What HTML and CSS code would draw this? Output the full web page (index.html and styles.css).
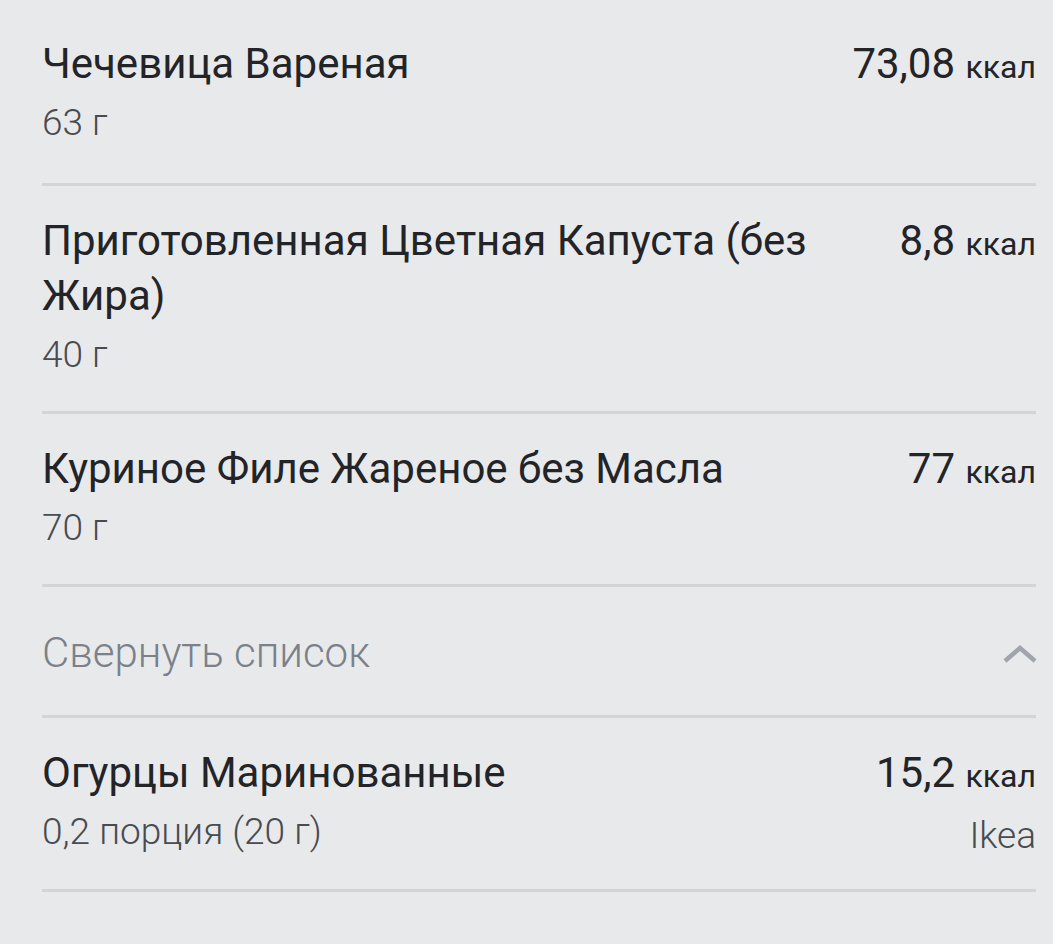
FILE: index.html
```html
<!DOCTYPE html>
<html lang="ru">
<head>
    <meta charset="UTF-8">
    <meta name="viewport" content="width=device-width, initial-scale=1.0">
    <title>Продукты</title>
    <link rel="stylesheet" href="styles.css">
</head>
<body>
    <div class="food_list">
        <div class="food_item">
            <div class="food_info">
                <p class="food_name">Чечевица Вареная</p>
                <p class="food_amount">63 г</p>
            </div>
            <div class="food_side">
                <p class="food_kcal">73,08 <span>ккал</span></p>
            </div>
        </div>
        <div class="food_item">
            <div class="food_info">
                <p class="food_name">Приготовленная Цветная Капуста (без Жира)</p>
                <p class="food_amount">40 г</p>
            </div>
            <div class="food_side">
                <p class="food_kcal">8,8 <span>ккал</span></p>
            </div>
        </div>
        <div class="food_item">
            <div class="food_info">
                <p class="food_name">Куриное Филе Жареное без Масла</p>
                <p class="food_amount">70 г</p>
            </div>
            <div class="food_side">
                <p class="food_kcal">77 <span>ккал</span></p>
            </div>
        </div>
        <div class="collapse_row">
            <p class="collapse_text">Свернуть список</p>
            <svg class="collapse_icon" width="34" height="19" viewBox="0 0 34 19">
                <polyline points="2,16 17,3 32,16" fill="none" stroke="#a0a5ac" stroke-width="4.5"/>
            </svg>
        </div>
        <div class="food_item">
            <div class="food_info">
                <p class="food_name">Огурцы Маринованные</p>
                <p class="food_amount">0,2 порция (20 г)</p>
            </div>
            <div class="food_side">
                <p class="food_kcal">15,2 <span>ккал</span></p>
                <p class="food_brand">Ikea</p>
            </div>
        </div>
    </div>
</body>
</html>
```

FILE: styles.css
```css
* { margin: 0; padding: 0; box-sizing: border-box; }

body {
    background-color: #e8e9eb;
    font-family: Roboto, "Noto Sans", sans-serif;
    color: #222428;
}

.food_list {
    padding: 0 17px 0 42px;
}

.food_item {
    display: flex;
    justify-content: space-between;
    gap: 40px;
    padding: 27px 0 29px;
    border-bottom: 3px solid #d3d4d7;
}

.food_item:first-child {
    padding: 36px 0 33px;
}

.food_item:last-child {
    padding-bottom: 26px;
}

.food_info {
    flex: 1;
}

.food_name {
    font-size: 42px;
    line-height: 55px;
}

.food_amount {
    margin-top: 4px;
    font-size: 37px;
    font-weight: 300;
    line-height: 55px;
    color: #484b50;
}

.food_side {
    text-align: right;
    white-space: nowrap;
}

.food_kcal {
    font-size: 42px;
    line-height: 55px;
}

.food_kcal span {
    font-size: 32px;
}

.food_brand {
    margin-top: 4px;
    font-size: 37px;
    font-weight: 300;
    line-height: 55px;
    color: #484b50;
}

.collapse_row {
    display: flex;
    justify-content: space-between;
    align-items: center;
    height: 131px;
    padding-top: 2px;
    border-bottom: 3px solid #d3d4d7;
}

.collapse_text {
    font-size: 42px;
    font-weight: 300;
    color: #7a818a;
}

.collapse_icon {
    margin-right: -1px;
    margin-top: 4px;
}
```
